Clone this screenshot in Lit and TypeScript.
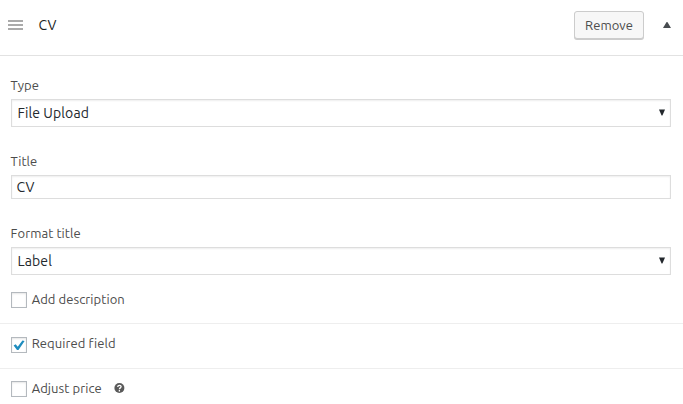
import { LitElement, html, css, svg } from "lit";
import { customElement, property } from "lit/decorators.js";

@customElement("field-select")
class FieldSelect extends LitElement {
  static styles = css`
    :host { display: block; }
    .box {
      box-sizing: border-box; height: 28px; border: 1px solid #ddd; background: #fff;
      box-shadow: inset 0 1px 2px rgba(0, 0, 0, 0.07);
      display: flex; align-items: center; justify-content: space-between;
      padding: 0 5px 0 5.5px; font-size: 14px; line-height: 26px; color: #23282d;
      letter-spacing: 0.1px;
    }
    .text { white-space: nowrap; }
    svg { display: block; margin-top: -1px; }
  `;
  render() {
    return html`<div class="box"><span class="text"><slot></slot></span>
      <svg width="6" height="7" viewBox="0 0 6 7"><path d="M0 .5H6L3.4 6.5H2.6Z" fill="#23282d"/></svg></div>`;
  }
}

@customElement("check-box")
class CheckBox extends LitElement {
  @property({ type: Boolean }) checked = false;
  static styles = css`
    :host { display: block; flex: none; }
    .box {
      box-sizing: border-box; width: 16px; height: 16px; border: 1px solid #b4b9be;
      background: #fff; box-shadow: inset 0 1px 2px rgba(0, 0, 0, 0.1);
    }
    svg { display: block; }
  `;
  render() {
    return html`<div class="box"><svg width="14" height="14" viewBox="0 0 14 14">
      ${this.checked ? svg`<path d="M1.6 7.5L3.7 6.3L5.7 8.7L10.4 2.4L12.6 2.9L6.5 12H5Z" fill="#1e8cbe"/>` : ""}
    </svg></div>`;
  }
}

@customElement("app-root")
class AppRoot extends LitElement {
  static styles = css`
    :host {
      display: block; height: 404px; overflow: hidden; background: #fff; color: #4c4c4c;
      font: 13px/18px Ubuntu, "Noto Sans", sans-serif;
    }
    svg { display: block; }
    .header {
      box-sizing: border-box; height: 56px; border-bottom: 1px solid #e2e2e2;
      display: flex; align-items: flex-start; padding: 11px 12px 0 8px;
    }
    .grip { margin-top: 9px; }
    .name { margin: 5px 0 0 15.5px; flex: 1; color: #191e23; font-size: 14px; letter-spacing: 0.2px; }
    .remove {
      box-sizing: border-box; width: 70px; height: 28px; padding: 0; border: 1px solid #ccc;
      border-radius: 3px; background: #f7f7f7; box-shadow: 0 1px 0 #ccc; color: #4c4c4c;
      font: inherit; line-height: 26px; letter-spacing: 0.05px;
    }
    .toggle { margin: 11px 0 0 19px; }
    .fields { padding: 21px 12px 0 11px; }
    .label { height: 23px; margin-left: -0.4px; letter-spacing: 0.07px; }
    .type .label { height: 22px; margin-top: -1px; padding-bottom: 1px; }
    .type { margin-bottom: 25px; }
    .title { margin-bottom: 25px; }
    .input {
      box-sizing: border-box; height: 24px; border: 1px solid #ddd; padding-left: 4.5px;
      box-shadow: inset 0 1px 2px rgba(0, 0, 0, 0.07); color: #23282d; font-size: 14px;
      line-height: 22px; letter-spacing: 0.2px;
    }
    .row {
      box-sizing: border-box; height: 45px; display: flex; align-items: flex-start;
      padding: 13px 0 0 11px; border-bottom: 1px solid #eee;
    }
    .row.first { height: 49px; padding-top: 17px; }
    .row.last { padding-top: 12px; border: 0; height: 36px; }
    .caption { margin: -3px 0 0 4.7px; white-space: nowrap; letter-spacing: 0.07px; }
    .row.first .caption, .row.last .caption { margin-top: -2px; }
    .help { margin: 2px 0 0 12px; }
  `;
  render() {
    return html`
      <div class="header">
        <svg class="grip" width="15" height="10" viewBox="0 0 15 10"><path d="M0 0H15V2H0ZM0 4H15V6H0ZM0 8H15V10H0Z" fill="#aaa"/></svg>
        <div class="name">CV</div>
        <button class="remove">Remove</button>
        <svg class="toggle" width="8" height="6" viewBox="0 0 8 6"><path d="M0 6L3.6 0H4.4L8 6Z" fill="#484c50"/></svg>
      </div>
      <div class="fields">
        <div class="type"><div class="label">Type</div><field-select>File Upload</field-select></div>
        <div class="title"><div class="label">Title</div><div class="input">CV</div></div>
        <div><div class="label">Format title</div><field-select>Label</field-select></div>
      </div>
      <div class="row first"><check-box></check-box><span class="caption">Add description</span></div>
      <div class="row"><check-box checked></check-box><span class="caption">Required field</span></div>
      <div class="row last"><check-box></check-box><span class="caption">Adjust price</span>
        <svg class="help" width="11" height="11" viewBox="0 0 11 11">
          <circle cx="5.4" cy="5" r="5" fill="#5a5a5a"/>
          <path d="M3.7 4C3.8 1.8 7.2 1.9 7.1 3.8C7 4.9 5.5 4.9 5.4 6.2M5.4 7.1V8.4" fill="none" stroke="#fff" stroke-width="1.3"/>
        </svg>
      </div>`;
  }
}
